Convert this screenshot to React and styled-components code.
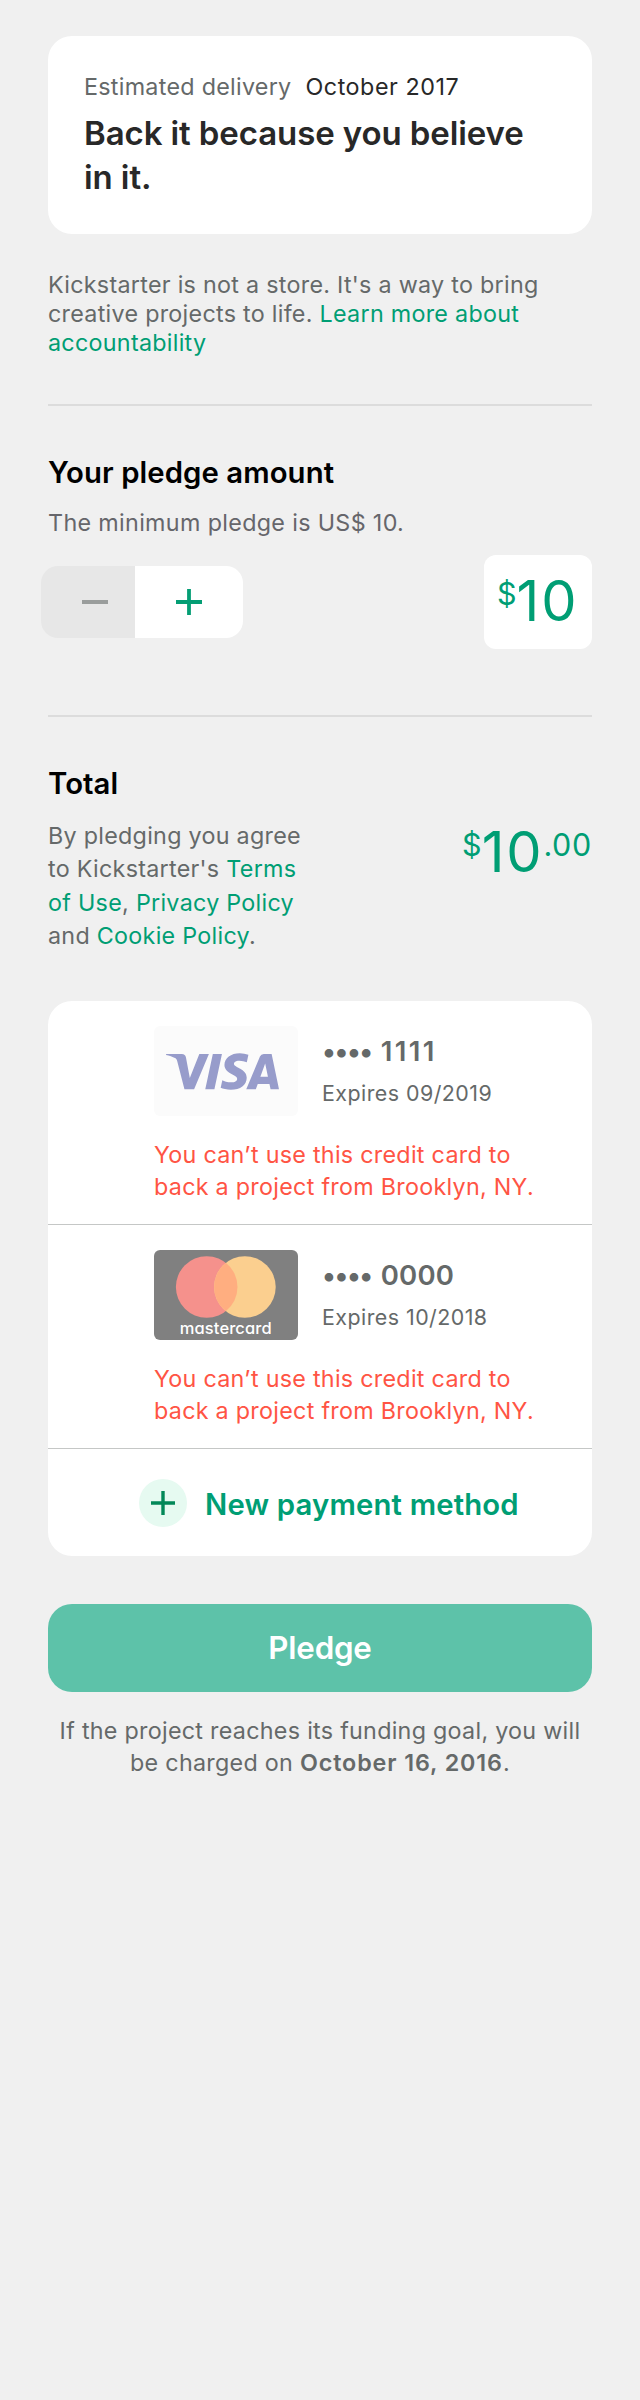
import React from 'react';
import styled, { createGlobalStyle } from 'styled-components';
import { SiVisa } from 'react-icons/si';

const GlobalStyle = createGlobalStyle`
  *, *::before, *::after { box-sizing: border-box; }
  body {
    margin: 0;
    background: #f0f0f0;
    font-family: Inter, 'Liberation Sans', sans-serif;
    font-size: 23.3px;
    letter-spacing: 0.28px;
    color: #656969;
  }
  h2, p { margin: 0; }
  button { font: inherit; border: 0; padding: 0; }
`;

const Page = styled.main`
  width: 640px;
  min-height: 2400px;
  padding: 36px 48px 0;
  background: #f0f0f0;
`;

const RewardCard = styled.section`
  height: 198px;
  padding: 37px 36px 0;
  border-radius: 24px;
  background: #fff;
  line-height: 28px;
`;

const DeliveryDate = styled.span`
  margin-left: 14px;
  color: #282828;
  letter-spacing: 0.54px;
`;

const RewardTitle = styled.h2`
  margin-top: 10px;
  color: #282828;
  font-size: 33px;
  font-weight: 600;
  line-height: 44px;
  letter-spacing: -0.1px;
`;

const Notice = styled.p`
  margin: 36px 0 47px;
  line-height: 29px;
`;

const Link = styled.a`
  color: #009e74;
  text-decoration: none;
`;

const Divider = styled.hr`
  height: 2px;
  margin: 0;
  border: 0;
  background: #dcdcdc;
`;

const SectionTitle = styled.h2`
  margin-top: 49px;
  color: #000;
  font-size: 29.3px;
  font-weight: 600;
  line-height: 36px;
  letter-spacing: 0.08px;
`;

const MinimumNote = styled.p`
  margin-top: 18px;
  color: #66666b;
  line-height: 28px;
  letter-spacing: 0.34px;
`;

const PledgeRow = styled.div`
  display: flex;
  align-items: center;
  justify-content: space-between;
  margin: 18px 0 66px -7px;
`;

const Stepper = styled.div`
  display: flex;
  width: 202px;
  height: 72px;
  overflow: hidden;
  border-radius: 17px;
`;

const StepButton = styled.button`
  display: flex;
  align-items: center;
  justify-content: center;
  width: ${(p) => (p.$muted ? 94 : 108)}px;
  padding-left: ${(p) => (p.$muted ? 14 : 0)}px;
  background: ${(p) => (p.$muted ? '#e7e7e7' : '#fff')};
  color: ${(p) => (p.$muted ? '#9a9d9c' : '#049e74')};
`;

const AmountBox = styled.div`
  width: 108px;
  height: 94px;
  padding: 18px 0 0 13px;
  border-radius: 12px;
  background: #fff;
`;

const Amount = styled.div`
  display: flex;
  align-items: flex-start;
  color: #009e74;
  letter-spacing: 0;
`;

const AmountMain = styled.span`
  font-size: 56px;
  line-height: 56px;
  letter-spacing: 1.8px;
`;

const AmountMinor = styled.span`
  padding-top: 5px;
  font-size: 30.5px;
  line-height: 32px;
  letter-spacing: ${(p) => p.$spacing || 0}px;
`;

const TotalRow = styled.div`
  display: flex;
  justify-content: space-between;
  margin: 17px 0 49px;
`;

const Terms = styled.p`
  width: 262px;
  line-height: 33.25px;
`;

const TotalAmount = styled.div`
  padding-top: 5px;
`;

const PaymentCard = styled.section`
  overflow: hidden;
  border-radius: 24px;
  background: #fff;
`;

const PaymentRow = styled.div`
  height: 224px;
  padding: 25px 0 0 106px;
  border-bottom: 1px solid #c5c7c6;
`;

const CardSummary = styled.div`
  display: flex;
`;

const CardLogo = styled.div`
  display: flex;
  align-items: center;
  justify-content: center;
  width: 144px;
  height: 90px;
  overflow: hidden;
  border-radius: 6px;
  background: ${(p) => p.$background};
  color: #979ccb;
`;

const VisaMark = styled(SiVisa)`
  margin-right: 7px;
`;

const CardInfo = styled.div`
  padding: 9px 0 0 24px;
`;

const CardNumber = styled.div`
  display: flex;
  gap: 9px;
  font-size: 27.5px;
  font-weight: 600;
  line-height: 32px;
`;

const Dots = styled.span`
  letter-spacing: -1.4px;
`;

const Digits = styled.span`
  letter-spacing: ${(p) => p.$spacing}px;
`;

const Expiry = styled.div`
  margin-top: 12px;
  font-size: 21.4px;
  line-height: 28px;
  letter-spacing: 0.46px;
`;

const CardError = styled.p`
  margin-top: 23px;
  color: #ff5444;
  line-height: 32.25px;
`;

const NewMethod = styled.button`
  display: flex;
  align-items: center;
  gap: 18px;
  width: 100%;
  height: 107px;
  padding-left: 91px;
  background: none;
  color: #009e74;
  font-size: 29.3px;
  font-weight: 600;
  letter-spacing: 0.17px;
`;

const NewMethodLabel = styled.span`
  padding-top: 3px;
`;

const PlusBadge = styled.span`
  display: flex;
  align-items: center;
  justify-content: center;
  width: 48px;
  height: 48px;
  border-radius: 50%;
  background: #e6faf1;
  color: #028858;
`;

const PledgeButton = styled.button`
  display: block;
  width: 100%;
  height: 88px;
  margin-top: 48px;
  border-radius: 24px;
  background: #5dc2a9;
  color: #fff;
  font-size: 31.3px;
  font-weight: 600;
  letter-spacing: -0.2px;
`;

const ChargeNote = styled.p`
  margin-top: 23px;
  line-height: 32px;
  text-align: center;
`;

const ChargeDate = styled.strong`
  font-weight: 600;
  letter-spacing: 0.9px;
`;

const MarkText = styled.text`
  font-size: 16.5px;
  font-weight: 500;
  letter-spacing: 0.1px;
  font-feature-settings: 'cv11';
`;

function Plus({ size, weight = 3.8 }) {
  const c = size / 2;
  return (
    <svg width={size} height={size} viewBox={`0 0 ${size} ${size}`}>
      <path d={`M0 ${c}H${size}M${c} 0V${size}`} stroke="currentColor" strokeWidth={weight} />
    </svg>
  );
}

function Minus() {
  return (
    <svg width="26" height="4" viewBox="0 0 26 4">
      <rect width="26" height="4" fill="currentColor" />
    </svg>
  );
}

function MastercardLogo() {
  return (
    <svg width="144" height="90" viewBox="0 0 144 90">
      <circle cx="52.7" cy="37" r="30.8" fill="#f5918c" />
      <circle cx="90.9" cy="37" r="30.8" fill="#fbcf8f" />
      <path d="M71.8 12.84A30.8 30.8 0 0 1 71.8 61.16A30.8 30.8 0 0 1 71.8 12.84Z" fill="#ffae80" />
      <MarkText x="71.8" y="83.5" textAnchor="middle" fill="#fff">mastercard</MarkText>
    </svg>
  );
}

const cards = [
  { digits: '1111', spacing: 2.4, expires: '09/2019', background: '#fbfbfb', logo: <VisaMark size={113} /> },
  { digits: '0000', spacing: 0.2, expires: '10/2018', background: '#808080', logo: <MastercardLogo /> },
];

export default function App() {
  return (
    <>
      <GlobalStyle />
      <Page>
        <RewardCard>
          <div>
            Estimated delivery<DeliveryDate>October 2017</DeliveryDate>
          </div>
          <RewardTitle>Back it because you believe in it.</RewardTitle>
        </RewardCard>
        <Notice>
          Kickstarter is not a store. It's a way to bring creative projects to life.{' '}
          <Link>Learn more about accountability</Link>
        </Notice>

        <Divider />
        <SectionTitle>Your pledge amount</SectionTitle>
        <MinimumNote>The minimum pledge is US$ 10.</MinimumNote>
        <PledgeRow>
          <Stepper>
            <StepButton $muted aria-label="Decrease"><Minus /></StepButton>
            <StepButton aria-label="Increase"><Plus size={26} /></StepButton>
          </Stepper>
          <AmountBox>
            <Amount>
              <AmountMinor>$</AmountMinor>
              <AmountMain>10</AmountMain>
            </Amount>
          </AmountBox>
        </PledgeRow>

        <Divider />
        <SectionTitle>Total</SectionTitle>
        <TotalRow>
          <Terms>
            By pledging you agree to Kickstarter's <Link>Terms of Use</Link>, <Link>Privacy Policy</Link> and{' '}
            <Link>Cookie Policy</Link>.
          </Terms>
          <TotalAmount>
            <Amount>
              <AmountMinor>$</AmountMinor>
              <AmountMain>10</AmountMain>
              <AmountMinor $spacing={0.7}>.00</AmountMinor>
            </Amount>
          </TotalAmount>
        </TotalRow>

        <PaymentCard>
          {cards.map((card) => (
            <PaymentRow key={card.digits}>
              <CardSummary>
                <CardLogo $background={card.background}>{card.logo}</CardLogo>
                <CardInfo>
                  <CardNumber>
                    <Dots>••••</Dots>
                    <Digits $spacing={card.spacing}>{card.digits}</Digits>
                  </CardNumber>
                  <Expiry>Expires {card.expires}</Expiry>
                </CardInfo>
              </CardSummary>
              <CardError>
                You can’t use this credit card to
                <br />
                back a project from Brooklyn, NY.
              </CardError>
            </PaymentRow>
          ))}
          <NewMethod>
            <PlusBadge><Plus size={24} weight={3.4} /></PlusBadge>
            <NewMethodLabel>New payment method</NewMethodLabel>
          </NewMethod>
        </PaymentCard>

        <PledgeButton>Pledge</PledgeButton>
        <ChargeNote>
          If the project reaches its funding goal, you will be charged on <ChargeDate>October 16, 2016</ChargeDate>.
        </ChargeNote>
      </Page>
    </>
  );
}
